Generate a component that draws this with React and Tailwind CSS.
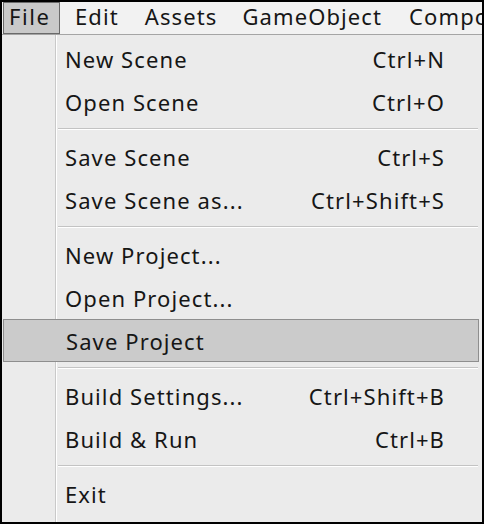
import React from "react";

const font = { fontFamily: '"Noto Sans", "Open Sans", sans-serif' };

function Item({ label, shortcut, active }) {
  return (
    <div
      className={
        "h-[43px] flex items-center justify-between " +
        (active
          ? "relative z-10 ml-[1px] mr-[3px] pl-[62px] pr-[35px] bg-[#cbcbcb] border border-[#8e8e8e]"
          : "pl-[63px] pr-[38px]")
      }
    >
      <span>{label}</span>
      {shortcut ? <span className="-mr-[1px]">{shortcut}</span> : null}
    </div>
  );
}

function Sep() {
  return (
    <div className="h-[12px] flex flex-col justify-center pl-[56px] pr-[4px]">
      <div className="h-px bg-[#c3c3c3]" />
      <div className="h-px bg-white" />
    </div>
  );
}

export default function App() {
  return (
    <div
      className="w-[484px] h-[524px] border-2 border-black bg-[#ebebeb] overflow-hidden flex flex-col text-[22px] tracking-[1.1px] text-[#161616] leading-none"
      style={font}
    >
      <div className="h-[33px] shrink-0 flex items-stretch bg-[#f2f2f2] border-b border-[#a5a5a5] whitespace-nowrap">
        <div className="ml-[1px] w-[57px] shrink-0 flex items-center pl-[5px] pb-[5px] tracking-[1.6px] bg-[#c9c9c9] border border-[#6a6a6a]">File</div>
        <div className="flex items-center pb-[5px] ml-[15px]">Edit</div>
        <div className="flex items-center pb-[5px] ml-[26px]">Assets</div>
        <div className="flex items-center pb-[5px] ml-[25px]">GameObject</div>
        <div className="flex items-center pb-[5px] ml-[27px]">Component</div>
      </div>
      <div className="relative flex-1 pt-[2px]">
        <div className="absolute left-[53px] top-0 bottom-0 w-px bg-[#c9c9c9]" />
        <div className="absolute left-[54px] top-0 bottom-0 w-px bg-white" />
        <Item label="New Scene" shortcut="Ctrl+N" />
        <Item label="Open Scene" shortcut="Ctrl+O" />
        <Sep />
        <Item label="Save Scene" shortcut="Ctrl+S" />
        <Item label="Save Scene as..." shortcut="Ctrl+Shift+S" />
        <Sep />
        <Item label="New Project..." />
        <Item label="Open Project..." />
        <Item label="Save Project" active />
        <Sep />
        <Item label="Build Settings..." shortcut="Ctrl+Shift+B" />
        <Item label="Build & Run" shortcut="Ctrl+B" />
        <Sep />
        <Item label="Exit" />
      </div>
    </div>
  );
}
